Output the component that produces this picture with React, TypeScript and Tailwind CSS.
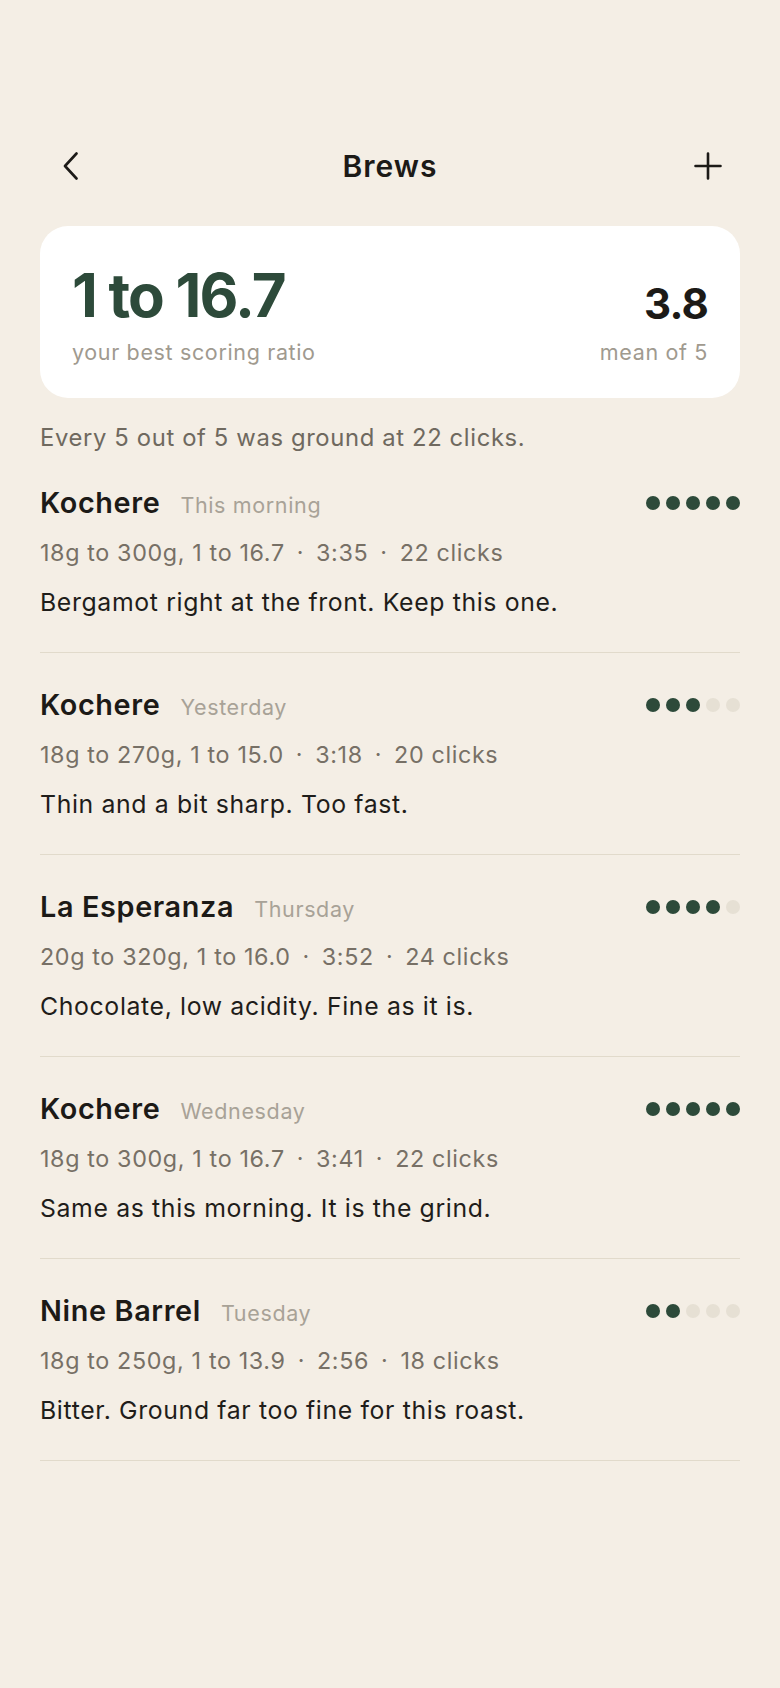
import React from "react";

type Brew = {
  bean: string;
  when: string;
  recipe: string;
  time: string;
  clicks: string;
  note: string;
  score: number;
};

const brews: Brew[] = [
  {
    bean: "Kochere",
    when: "This morning",
    recipe: "18g to 300g, 1 to 16.7",
    time: "3:35",
    clicks: "22 clicks",
    note: "Bergamot right at the front. Keep this one.",
    score: 5,
  },
  {
    bean: "Kochere",
    when: "Yesterday",
    recipe: "18g to 270g, 1 to 15.0",
    time: "3:18",
    clicks: "20 clicks",
    note: "Thin and a bit sharp. Too fast.",
    score: 3,
  },
  {
    bean: "La Esperanza",
    when: "Thursday",
    recipe: "20g to 320g, 1 to 16.0",
    time: "3:52",
    clicks: "24 clicks",
    note: "Chocolate, low acidity. Fine as it is.",
    score: 4,
  },
  {
    bean: "Kochere",
    when: "Wednesday",
    recipe: "18g to 300g, 1 to 16.7",
    time: "3:41",
    clicks: "22 clicks",
    note: "Same as this morning. It is the grind.",
    score: 5,
  },
  {
    bean: "Nine Barrel",
    when: "Tuesday",
    recipe: "18g to 250g, 1 to 13.9",
    time: "2:56",
    clicks: "18 clicks",
    note: "Bitter. Ground far too fine for this roast.",
    score: 2,
  },
];

function ScoreDots({ score }: { score: number }) {
  return (
    <div className="flex gap-[6px]">
      {[1, 2, 3, 4, 5].map((n) => (
        <span
          key={n}
          className={
            n <= score
              ? "h-[14px] w-[14px] rounded-full bg-[#2d4a3a]"
              : "h-[14px] w-[14px] rounded-full bg-[#e6e0d4]"
          }
        />
      ))}
    </div>
  );
}

function BrewRow({ brew }: { brew: Brew }) {
  return (
    <li className="border-b border-[#e1dacb] pt-9 pb-[35px]">
      <div className="flex h-8 items-center justify-between">
        <div className="flex items-baseline gap-5">
          <span className="text-[28.8px] font-semibold text-[#1c1a17]">{brew.bean}</span>
          <span className="text-[21.5px] text-[#a8a297]">{brew.when}</span>
        </div>
        <ScoreDots score={brew.score} />
      </div>
      <p className="mt-5 text-[23.3px] leading-7 text-[#777066]">
        {brew.recipe}
        <span className="px-[12px]">·</span>
        {brew.time}
        <span className="px-[12px]">·</span>
        {brew.clicks}
      </p>
      <p className="mt-5 text-[24.8px] leading-[30px] text-[#1f1d1a]">{brew.note}</p>
    </li>
  );
}

export default function App() {
  return (
    <main
      className="min-h-[1688px] w-full bg-[#f4eee5] px-10 pt-[138px] tracking-[0.04em]"
      style={{ fontFamily: "Inter, 'Noto Sans', sans-serif" }}
    >
      <header className="relative flex h-14 items-center justify-between pl-[23px] pr-[18px]">
        <button type="button" aria-label="Back" className="text-[#1c1a17]">
          <svg width="15" height="28" viewBox="0 0 15 28" fill="none">
            <path d="M13.5 1.5 L2 14 L13.5 26.5" stroke="currentColor" strokeWidth="2.6" strokeLinecap="round" strokeLinejoin="round" />
          </svg>
        </button>
        <h1 className="absolute left-1/2 -translate-x-1/2 text-[30px] font-semibold tracking-[0.035em] text-[#1c1a17]">
          Brews
        </h1>
        <button type="button" aria-label="Add brew" className="text-[#1c1a17]">
          <svg width="28" height="28" viewBox="0 0 28 28" fill="none">
            <path d="M14 1.5 V26.5 M1.5 14 H26.5" stroke="currentColor" strokeWidth="2.6" strokeLinecap="round" />
          </svg>
        </button>
      </header>

      <section className="mt-8 flex items-end justify-between rounded-[28px] bg-white px-8 pt-[39px] pb-8">
        <div>
          <div className="text-[60px] leading-none font-bold tracking-[-0.03em] text-[#2d4a3a]">1 to 16.7</div>
          <div className="mt-[13px] text-[21.5px] leading-7 text-[#a09a8f]">your best scoring ratio</div>
        </div>
        <div className="text-right">
          <div className="text-[42px] leading-none font-bold tracking-[-0.02em] text-[#1c1a17]">3.8</div>
          <div className="mt-[13px] text-[21.5px] leading-7 text-[#a09a8f]">mean of 5</div>
        </div>
      </section>

      <p className="mt-[26px] text-[23.8px] leading-7 text-[#6f695f]">Every 5 out of 5 was ground at 22 clicks.</p>

      <ul className="-mt-px">
        {brews.map((brew, i) => (
          <BrewRow key={i} brew={brew} />
        ))}
      </ul>
    </main>
  );
}
